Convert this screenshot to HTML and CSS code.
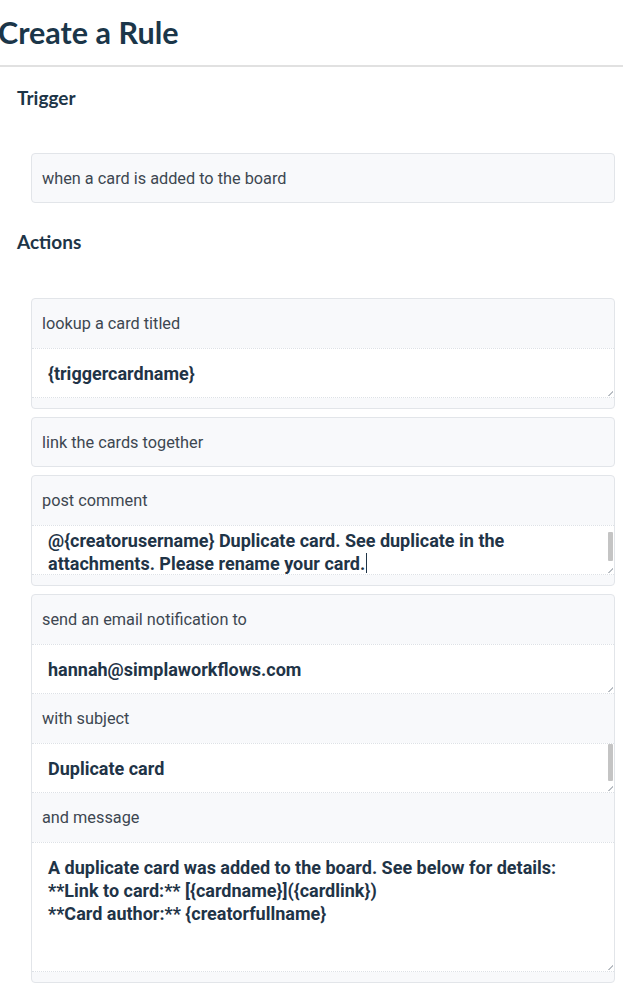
FILE: index.html
```html
<!DOCTYPE html>
<html lang="en">
<head>
<meta charset="utf-8">
<title>Create a Rule</title>
<link rel="stylesheet" href="styles.css">
</head>
<body>
  <header class="page-header">
    <h1 class="page-title">Create a Rule</h1>
  </header>
  <main class="content">
    <h2 class="section-title first">Trigger</h2>
    <div class="card">
      <div class="label single">when a card is added to the board</div>
    </div>

    <h2 class="section-title">Actions</h2>
    <div class="card padded">
      <div class="label">lookup a card titled</div>
      <div class="field">{triggercardname}<span class="grip"></span></div>
    </div>
    <div class="card">
      <div class="label single">link the cards together</div>
    </div>
    <div class="card padded">
      <div class="label">post comment</div>
      <div class="field scrolled">@{creatorusername} Duplicate card. See duplicate in the attachments. Please rename your card.<span class="caret"></span>
        <span class="thumb thumb-comment"></span><span class="grip"></span></div>
    </div>
    <div class="card padded">
      <div class="label">send an email notification to</div>
      <div class="field">hannah@simplaworkflows.com<span class="grip"></span></div>
      <div class="label">with subject</div>
      <div class="field">Duplicate card<span class="thumb thumb-subject"></span><span class="grip"></span></div>
      <div class="label">and message</div>
      <div class="field tall">A duplicate card was added to the board. See below for details:<br>**Link to card:** [{cardname}]({cardlink})<br>**Card author:** {creatorfullname}<span class="grip"></span></div>
    </div>
  </main>
</body>
</html>
```

FILE: styles.css
```css
* { box-sizing: border-box; }

html, body {
  margin: 0;
  padding: 0;
  background: #ffffff;
}

body {
  font-family: Roboto, "Liberation Sans", sans-serif;
  width: 623px;
  overflow: hidden;
}

.page-header {
  padding: 12px 0 13px 0;
  border-bottom: 2px solid #e1e1e1;
}

.page-title {
  margin: 0 0 0 -2px;
  font-family: Lato, "Liberation Sans", sans-serif;
  font-weight: 700;
  font-size: 30.5px;
  line-height: 40px;
  color: #1b3649;
}

.content {
  padding: 0 8px 0 17px;
}

.section-title {
  margin: 27px 0 44px 0;
  font-family: Lato, "Liberation Sans", sans-serif;
  font-weight: 700;
  font-size: 19px;
  line-height: 24px;
  color: #1d3547;
}

.section-title.first {
  margin-top: 19px;
  margin-bottom: 43px;
}

.card {
  margin: 0 0 8px 14px;
  background: #f8f9fb;
  border: 1px solid #e2e5e9;
  border-radius: 4px;
  overflow: hidden;
}

.card.padded {
  padding-bottom: 10px;
}

.label {
  height: 49px;
  display: flex;
  align-items: center;
  padding: 0 10px;
  font-size: 16.3px;
  color: #3d4751;
}

.label.single {
  height: 48px;
}

.field {
  position: relative;
  height: 50px;
  padding: 13px 16px 0 16px;
  background: #ffffff;
  border-top: 1px dotted #dde1e6;
  border-bottom: 1px dotted #dde1e6;
  font-weight: 700;
  font-size: 18px;
  line-height: 23px;
  color: #1f3447;
  overflow: hidden;
}

.field.scrolled {
  padding-top: 3px;
  padding-right: 24px;
}

.field.tall {
  height: 130px;
}

.caret {
  display: inline-block;
  width: 1px;
  height: 20px;
  margin-left: 1px;
  vertical-align: -3px;
  background: #1f3447;
}

.thumb {
  position: absolute;
  right: 1px;
  width: 5px;
  background: #c4c4c4;
  border-radius: 1px;
}

.thumb-comment {
  top: 6px;
  height: 29px;
}

.thumb-subject {
  top: 0;
  height: 37px;
}

.grip {
  position: absolute;
  right: 1px;
  bottom: 1px;
  width: 5px;
  height: 5px;
  background: linear-gradient(135deg, transparent 45%, #b9bec4 45%, #b9bec4 60%, transparent 60%);
}
```
